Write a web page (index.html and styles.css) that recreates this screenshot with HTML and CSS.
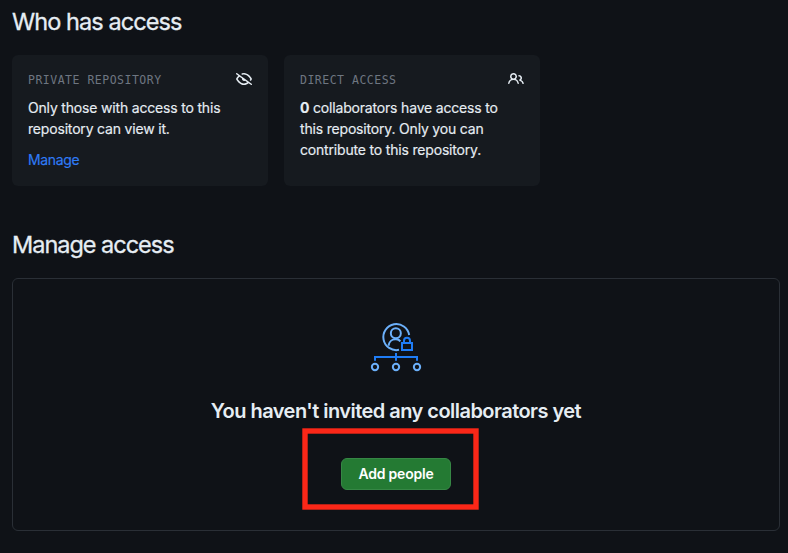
FILE: index.html
```html
<!DOCTYPE html>
<html lang="en">
<head>
<meta charset="utf-8">
<title>Manage access</title>
<link rel="stylesheet" href="styles.css">
</head>
<body>
<main class="page">
  <h2 class="title who">Who has access</h2>
  <div class="cards">
    <section class="card">
      <header class="card-head">
        <span class="label">PRIVATE REPOSITORY</span>
        <svg class="icon" viewBox="0 0 16 16"><path d="M.143 2.31a.75.75 0 011.047-.167l14.5 10.5a.75.75 0 11-.88 1.214l-2.248-1.628C11.346 13.19 9.792 14 8 14c-1.981 0-3.67-.992-4.933-2.078C1.797 10.832.88 9.577.43 8.9a1.618 1.618 0 010-1.797c.353-.533.995-1.42 1.868-2.305L.31 3.357A.75.75 0 01.143 2.31zm3.386 3.378a14.21 14.21 0 00-1.85 2.244.12.12 0 00-.022.068c0 .021.006.045.022.068.412.621 1.242 1.75 2.366 2.717C5.175 11.758 6.527 12.5 8 12.5c1.195 0 2.31-.488 3.29-1.191L9.063 9.695A2 2 0 016.058 7.52l-2.53-1.832zM8 3.5c-.516 0-1.017.09-1.499.251a.75.75 0 11-.473-1.423A6.23 6.23 0 018 2c1.981 0 3.67.992 4.933 2.078 1.27 1.091 2.187 2.345 2.637 3.023a1.62 1.62 0 010 1.798c-.11.166-.248.365-.41.587a.75.75 0 11-1.21-.887c.148-.201.272-.382.371-.53a.119.119 0 000-.137c-.412-.621-1.242-1.75-2.366-2.717C10.825 4.242 9.473 3.5 8 3.5z"/></svg>
      </header>
      <p class="text">Only those with access to this<br>repository can view it.</p>
      <a class="link">Manage</a>
    </section>
    <section class="card">
      <header class="card-head">
        <span class="label">DIRECT ACCESS</span>
        <svg class="icon" viewBox="0 0 16 16"><path d="M5.5 3.5a2 2 0 100 4 2 2 0 000-4zM2 5.5a3.5 3.5 0 115.898 2.549 5.507 5.507 0 013.034 4.084.75.75 0 11-1.482.235 4.001 4.001 0 00-7.9 0 .75.75 0 01-1.482-.236A5.507 5.507 0 013.102 8.05 3.49 3.49 0 012 5.5zM11 4a.75.75 0 100 1.5 1.5 1.5 0 01.666 2.844.75.75 0 00-.416.672v.352a.75.75 0 00.574.73c1.2.289 2.162 1.2 2.522 2.372a.75.75 0 101.434-.44 5.01 5.01 0 00-2.56-3.012A3 3 0 0011 4z"/></svg>
      </header>
      <p class="text"><b>0</b> collaborators have access to<br>this repository. Only you can<br>contribute to this repository.</p>
    </section>
  </div>
  <h2 class="title manage">Manage access</h2>
  <section class="blank">
    <svg class="art" viewBox="0 0 216 186" fill="none">
      <g class="light">
        <path d="M147.500 60A39 39 0 1 0 117 104.500"/>
        <circle cx="107.500" cy="55" r="15"/>
        <path d="M86 92V90A20 20 0 0 1 106 73H108Q117 73 121 79"/>
        <circle cx="45" cy="156" r="9.500"/>
        <circle cx="108" cy="156" r="9.500"/>
        <circle cx="171" cy="156" r="9.500"/>
      </g>
      <g class="strong">
        <path d="M126 84H156V105H126ZM132 84V77A9 9 0 0 1 150 77V84M45 137V126H171V137M108 114V137"/>
      </g>
    </svg>
    <h3 class="message">You haven't invited any collaborators yet</h3>
    <div class="action">
      <button class="add">Add people</button>
      <svg class="marker" viewBox="0 0 177 82"><rect x="3" y="3" width="171" height="76"/></svg>
    </div>
  </section>
</main>
</body>
</html>
```
FILE: styles.css
```css
* { box-sizing: border-box; }
body {
  margin: 0;
  background: #0f1217;
  color: #e6edf3;
  font-family: Inter, "Liberation Sans", sans-serif;
  font-size: 14px;
  line-height: 21px;
}
.page { height: 553px; padding: 4px 8px 0 12px; overflow: hidden; }
.title { margin: 0; font-size: 23.5px; line-height: 36px; font-weight: 400; -webkit-text-stroke: 0.3px; white-space: nowrap; }
.who { letter-spacing: -0.92px; }
.manage { margin-top: 41px; letter-spacing: -1.02px; }
.cards { display: flex; gap: 16px; margin-top: 15px; }
.card { width: 256px; height: 131px; padding: 16px; border-radius: 6px; background: #161a1f; }
.card-head { display: flex; justify-content: space-between; height: 26px; }
.label {
  font-family: "DejaVu Sans Mono", "Liberation Mono", monospace;
  font-size: 11.5px;
  line-height: 18px;
  letter-spacing: 0.5px;
  color: #6e7681;
}
.icon { width: 16px; height: 16px; fill: #e6edf3; }
.text { margin: 0; letter-spacing: -0.18px; -webkit-text-stroke: 0.15px; white-space: nowrap; }
.link { display: block; margin-top: 10px; color: #2f7cf6; letter-spacing: -0.35px; -webkit-text-stroke: 0.15px; }
.blank {
  display: flex;
  flex-direction: column;
  align-items: center;
  height: 253px;
  margin-top: 15px;
  padding-top: 36px;
  border: 1px solid #2a2f36;
  border-radius: 6px;
}
.art { width: 72px; height: 62px; flex: none; }
.light { stroke: #6cb0fa; stroke-width: 6; }
.strong { stroke: #1f7cf5; stroke-width: 6; }
.message { margin: 19px 0 0; font-size: 20px; line-height: 30px; font-weight: 600; letter-spacing: -0.54px; white-space: nowrap; }
.action { position: relative; margin-top: 32px; }
.add {
  display: block;
  width: 110px;
  height: 32px;
  padding: 0;
  border: 1px solid #368745;
  border-radius: 6px;
  background: #247a33;
  color: #fff;
  font: 600 14px/20px Inter, "Liberation Sans", sans-serif;
  letter-spacing: -0.2px;
}
.marker { position: absolute; left: -39px; top: -30px; width: 177px; height: 82px; pointer-events: none; }
.marker rect { fill: none; stroke: #fb2718; stroke-width: 5.4; }
```
